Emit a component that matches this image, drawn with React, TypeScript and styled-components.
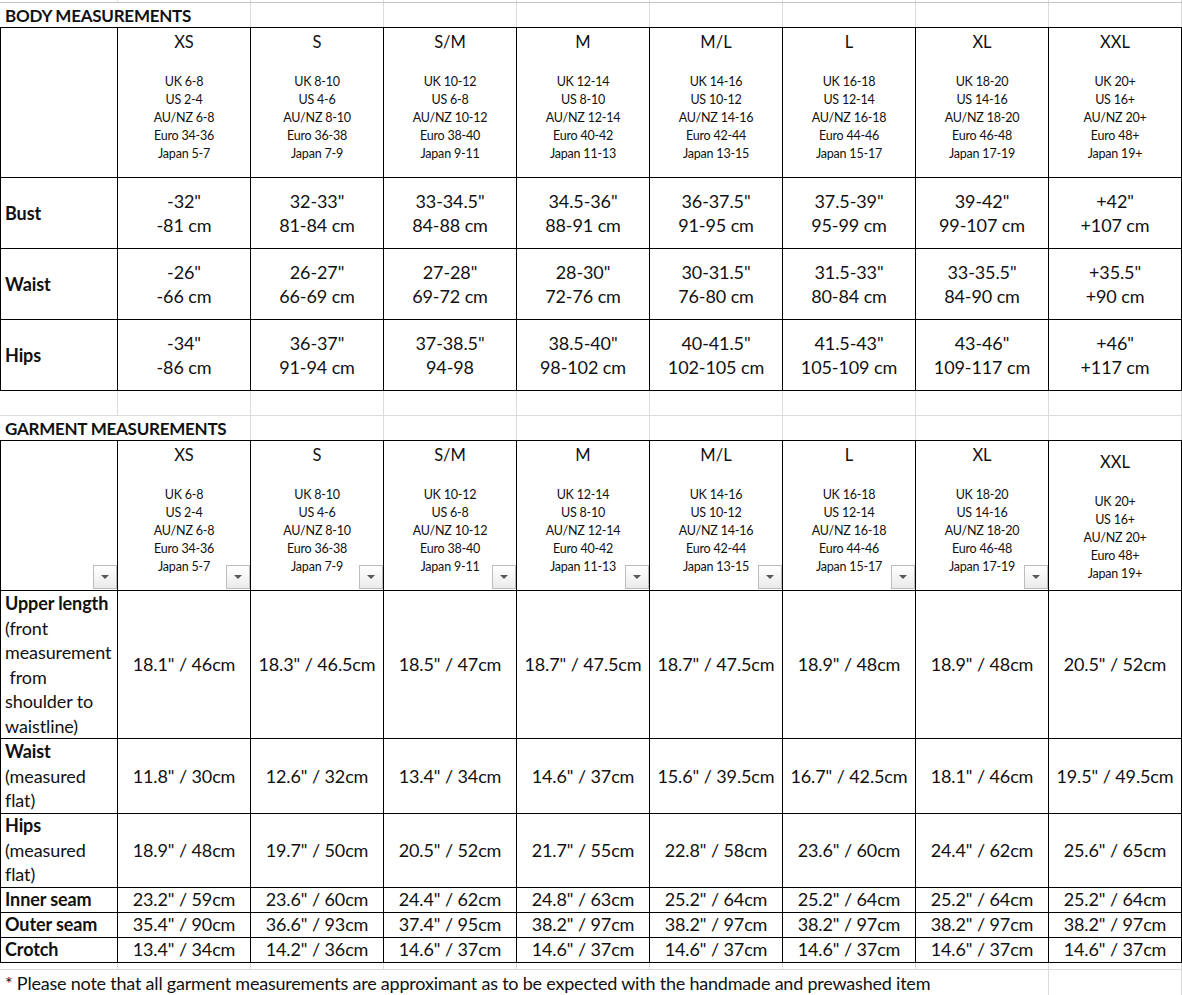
import React from 'react'
import styled, { createGlobalStyle, css } from 'styled-components'

const GlobalStyle = createGlobalStyle`
  html, body {
    margin: 0;
    padding: 0;
    background: #fff;
  }
  body {
    font-family: Lato, "Open Sans", "Liberation Sans", sans-serif;
    color: #111;
  }
`

const COLS = '118px repeat(8, 133px)'
const GRIDLINE = '#dadbdc'

interface Size {
    name: string;
    codes: string[];
}

const sizes: Size[] = [
    { name: 'XS', codes: ['UK 6-8', 'US 2-4', 'AU/NZ 6-8', 'Euro 34-36', 'Japan 5-7'] },
    { name: 'S', codes: ['UK 8-10', 'US 4-6', 'AU/NZ 8-10', 'Euro 36-38', 'Japan 7-9'] },
    { name: 'S/M', codes: ['UK 10-12', 'US 6-8', 'AU/NZ 10-12', 'Euro 38-40', 'Japan 9-11'] },
    { name: 'M', codes: ['UK 12-14', 'US 8-10', 'AU/NZ 12-14', 'Euro 40-42', 'Japan 11-13'] },
    { name: 'M/L', codes: ['UK 14-16', 'US 10-12', 'AU/NZ 14-16', 'Euro 42-44', 'Japan 13-15'] },
    { name: 'L', codes: ['UK 16-18', 'US 12-14', 'AU/NZ 16-18', 'Euro 44-46', 'Japan 15-17'] },
    { name: 'XL', codes: ['UK 18-20', 'US 14-16', 'AU/NZ 18-20', 'Euro 46-48', 'Japan 17-19'] },
    { name: 'XXL', codes: ['UK 20+', 'US 16+', 'AU/NZ 20+', 'Euro 48+', 'Japan 19+'] },
]

interface MeasureRow {
    label: string[];
    height: number;
    values: string[][];
}

const bodyRows: MeasureRow[] = [
    {
        label: ['Bust'], height: 71,
        values: [['-32"', '-81 cm'], ['32-33"', '81-84 cm'], ['33-34.5"', '84-88 cm'], ['34.5-36"', '88-91 cm'],
            ['36-37.5"', '91-95 cm'], ['37.5-39"', '95-99 cm'], ['39-42"', '99-107 cm'], ['+42"', '+107 cm']],
    },
    {
        label: ['Waist'], height: 71,
        values: [['-26"', '-66 cm'], ['26-27"', '66-69 cm'], ['27-28"', '69-72 cm'], ['28-30"', '72-76 cm'],
            ['30-31.5"', '76-80 cm'], ['31.5-33"', '80-84 cm'], ['33-35.5"', '84-90 cm'], ['+35.5"', '+90 cm']],
    },
    {
        label: ['Hips'], height: 71,
        values: [['-34"', '-86 cm'], ['36-37"', '91-94 cm'], ['37-38.5"', '94-98'], ['38.5-40"', '98-102 cm'],
            ['40-41.5"', '102-105 cm'], ['41.5-43"', '105-109 cm'], ['43-46"', '109-117 cm'], ['+46"', '+117 cm']],
    },
]

const one = (list: string[]) => list.map((v) => [v])

const garmentRows: MeasureRow[] = [
    {
        label: ['Upper length', '(front', 'measurement', ' from', 'shoulder to', 'waistline)'], height: 148,
        values: one(['18.1" / 46cm', '18.3" / 46.5cm', '18.5" / 47cm', '18.7" / 47.5cm', '18.7" / 47.5cm',
            '18.9" / 48cm', '18.9" / 48cm', '20.5" / 52cm']),
    },
    {
        label: ['Waist', '(measured', 'flat)'], height: 74,
        values: one(['11.8" / 30cm', '12.6" / 32cm', '13.4" / 34cm', '14.6" / 37cm', '15.6" / 39.5cm',
            '16.7" / 42.5cm', '18.1" / 46cm', '19.5" / 49.5cm']),
    },
    {
        label: ['Hips', '(measured', 'flat)'], height: 74,
        values: one(['18.9" / 48cm', '19.7" / 50cm', '20.5" / 52cm', '21.7" / 55cm', '22.8" / 58cm',
            '23.6" / 60cm', '24.4" / 62cm', '25.6" / 65cm']),
    },
    {
        label: ['Inner seam'], height: 25,
        values: one(['23.2" / 59cm', '23.6" / 60cm', '24.4" / 62cm', '24.8" / 63cm', '25.2" / 64cm',
            '25.2" / 64cm', '25.2" / 64cm', '25.2" / 64cm']),
    },
    {
        label: ['Outer seam'], height: 25,
        values: one(['35.4" / 90cm', '36.6" / 93cm', '37.4" / 95cm', '38.2" / 97cm', '38.2" / 97cm',
            '38.2" / 97cm', '38.2" / 97cm', '38.2" / 97cm']),
    },
    {
        label: ['Crotch'], height: 25,
        values: one(['13.4" / 34cm', '14.2" / 36cm', '14.6" / 37cm', '14.6" / 37cm', '14.6" / 37cm',
            '14.6" / 37cm', '14.6" / 37cm', '14.6" / 37cm']),
    },
]

const Sheet = styled.div`
    width: 1182px;
    display: flex;
    flex-direction: column;
`

/* plain spreadsheet rows, only faint gridlines */
const GridRow = styled.div<{ $h: number; $line?: string }>`
    display: grid;
    grid-template-columns: ${COLS};
    height: ${(p) => p.$h}px;
    box-sizing: border-box;
    ${(p) => p.$line && css`
        border-bottom: 1px solid ${p.$line};
    `}
`

const GridCell = styled.div<{ $span?: number }>`
    grid-column: span ${(p) => p.$span ?? 1};
    border-right: 1px solid ${GRIDLINE};
    display: flex;
    align-items: center;
    padding-left: 5px;
    white-space: nowrap;
    min-width: 0;
`

const SectionTitle = styled.span`
    font-size: 17px;
    font-weight: 700;
    letter-spacing: -0.25px;
`

const Note = styled.span`
    font-size: 18px;
    letter-spacing: -0.21px;
`

/* bordered table */
const Table = styled.div`
    border-top: 1px solid #000;
    display: flex;
    flex-direction: column;
`

const TableRow = styled.div<{ $h: number }>`
    display: grid;
    grid-template-columns: ${COLS};
    height: ${(p) => p.$h}px;
`

const Cell = styled.div<{ $first?: boolean }>`
    position: relative;
    box-sizing: border-box;
    min-width: 0;
    border-right: 1px solid #000;
    border-bottom: 1px solid #000;
    ${(p) => p.$first && css`
        border-left: 1px solid #000;
    `}
`

const HeaderCell = styled(Cell)<{ $middle?: boolean }>`
    display: flex;
    flex-direction: column;
    align-items: center;
    justify-content: ${(p) => (p.$middle ? 'center' : 'flex-start')};
`

const SizeName = styled.div`
    font-size: 16.5px;
    line-height: 28px;
`

const CodeList = styled.div`
    margin-top: 17px;
    font-size: 12.5px;
    line-height: 18px;
    letter-spacing: -0.2px;
    text-align: center;
`

const LabelCell = styled(Cell)`
    display: flex;
    flex-direction: column;
    justify-content: center;
    padding-left: 4px;
    font-size: 18px;
    line-height: 24.5px;
    white-space: pre;
`

const LabelLine = styled.span<{ $bold?: boolean }>`
    font-weight: ${(p) => (p.$bold ? 700 : 400)};
    letter-spacing: -0.1px;
`

const ValueCell = styled(Cell)<{ $tight?: boolean }>`
    display: flex;
    flex-direction: column;
    align-items: center;
    justify-content: center;
    font-size: 18px;
    line-height: ${(p) => (p.$tight ? '24.5px' : '24px')};
    white-space: nowrap;
    letter-spacing: -0.1px;
`

const FilterButton = styled.span`
    position: absolute;
    right: 0;
    bottom: 1px;
    width: 24px;
    height: 24px;
    box-sizing: border-box;
    border: 1px solid #bcbdbf;
    background: linear-gradient(#ffffff, #ebebec);
    display: flex;
    align-items: center;
    justify-content: center;

    &::after {
        content: '';
        width: 0;
        height: 0;
        border-left: 4px solid transparent;
        border-right: 4px solid transparent;
        border-top: 4px solid #56595c;
    }
`

const emptyCells = (n: number) => Array.from({ length: n }, (_, i) => <GridCell key={i} />)

const HeaderRow = ({ filters }: { filters: boolean }) => (
    <TableRow $h={150}>
        <HeaderCell $first>{filters && <FilterButton />}</HeaderCell>
        {sizes.map((s, i) => {
            const last = i === sizes.length - 1
            return (
                <HeaderCell key={s.name} $middle={filters && last}>
                    <SizeName>{s.name}</SizeName>
                    <CodeList>
                        {s.codes.map((c) => <div key={c}>{c}</div>)}
                    </CodeList>
                    {filters && !last && <FilterButton />}
                </HeaderCell>
            )
        })}
    </TableRow>
)

const Rows = ({ rows }: { rows: MeasureRow[] }) => (
    <>
        {rows.map((r) => (
            <TableRow key={r.label[0]} $h={r.height}>
                <LabelCell $first>
                    {r.label.map((l, i) => <LabelLine key={i} $bold={i === 0}>{l}</LabelLine>)}
                </LabelCell>
                {r.values.map((v, i) => (
                    <ValueCell key={i} $tight={v.length === 1}>
                        {v.map((line) => <span key={line}>{line}</span>)}
                    </ValueCell>
                ))}
            </TableRow>
        ))}
    </>
)

const App = () => (
    <>
        <GlobalStyle />
        <Sheet>
            <GridRow $h={3} $line="#c3c4c5">{emptyCells(9)}</GridRow>
            <GridRow $h={24}>
                <GridCell $span={2}><SectionTitle>BODY MEASUREMENTS</SectionTitle></GridCell>
                {emptyCells(7)}
            </GridRow>
            <Table>
                <HeaderRow filters={false} />
                <Rows rows={bodyRows} />
            </Table>
            <GridRow $h={25} $line={GRIDLINE}>{emptyCells(9)}</GridRow>
            <GridRow $h={24}>
                <GridCell $span={2}><SectionTitle>GARMENT MEASUREMENTS</SectionTitle></GridCell>
                {emptyCells(7)}
            </GridRow>
            <Table>
                <HeaderRow filters />
                <Rows rows={garmentRows} />
            </Table>
            <GridRow $h={8} $line={GRIDLINE}>{emptyCells(9)}</GridRow>
            <GridRow $h={26}>
                <GridCell $span={8}>
                    <Note>* Please note that all garment measurements are approximant as to be expected with the handmade and prewashed item</Note>
                </GridCell>
                <GridCell />
            </GridRow>
        </Sheet>
    </>
)

export default App
